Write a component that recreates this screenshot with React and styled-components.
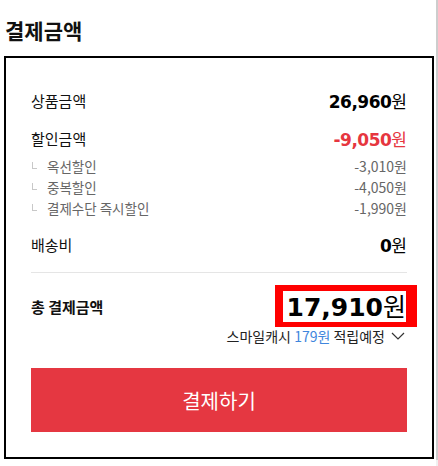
import React from "react";
import styled, { createGlobalStyle } from "styled-components";

const KR = `"Noto Sans CJK KR", "Noto Sans", sans-serif`;
const NUM = `"DejaVu Sans", "Noto Sans CJK KR", sans-serif`;

const discounts = [
  { name: "옥선할인", price: "-3,010" },
  { name: "중복할인", price: "-4,050" },
  { name: "결제수단 즉시할인", price: "-1,990" },
];

export default function App() {
  return (
    <Page>
      <GlobalStyle />
      <Main>
        <Title>결제금액</Title>
        <Box>
          <Row>
            <Label>상품금액</Label>
            <Amount>
              26,960<Won>원</Won>
            </Amount>
          </Row>
          <Row $gap>
            <Label>할인금액</Label>
            <Amount color="#e6363f">
              -9,050<Won>원</Won>
            </Amount>
          </Row>
          <SubList>
            {discounts.map((d) => (
              <SubRow key={d.name}>
                <SubName>
                  <Corner />
                  {d.name}
                </SubName>
                <SubPrice>{d.price}원</SubPrice>
              </SubRow>
            ))}
          </SubList>
          <Row $gap>
            <Label>배송비</Label>
            <Amount>
              0<Won>원</Won>
            </Amount>
          </Row>
          <Divider />
          <TotalRow>
            <TotalLabel>총 결제금액</TotalLabel>
            <Highlight>
              <TotalAmount>
                17,910<Won>원</Won>
              </TotalAmount>
            </Highlight>
          </TotalRow>
          <Cashback>
            <span>
              스마일캐시 <Blue>179원</Blue> 적립예정
            </span>
            <svg width="14" height="8" viewBox="0 0 14 8">
              <polyline
                points="1,1 7,7 13,1"
                fill="none"
                stroke="#333"
                strokeWidth="1.2"
              />
            </svg>
          </Cashback>
          <PayButton>결제하기</PayButton>
        </Box>
      </Main>
      <ScrollTrack>
        <Thumb />
      </ScrollTrack>
    </Page>
  );
}

const GlobalStyle = createGlobalStyle`
  body {
    margin: 0;
    background: #ffffff;
    font-family: ${KR};
    color: #111;
  }
`;

const Page = styled.div`
  display: flex;
  width: 438px;
  height: 466px;
  overflow: hidden;
`;

const Main = styled.div`
  flex: 1;
  padding: 16px 2px 0 4px;
`;

const ScrollTrack = styled.div`
  width: 2px;
  background: #f0f0f0;
  display: flex;
  flex-direction: column;
`;

const Thumb = styled.div`
  height: 460px;
  background: #cdcdcd;
`;

const Title = styled.h2`
  margin: 0 0 12px;
  padding-left: 1px;
  font-size: 21px;
  line-height: 28px;
  font-weight: bold;
  color: #111;
`;

const Box = styled.div`
  border: 2px solid #000;
  padding: 30px 25px 25px;
`;

const Row = styled.div`
  display: flex;
  justify-content: space-between;
  align-items: center;
  height: 24px;
  margin-top: ${(p) => (p.$gap ? "14px" : "0")};
`;

const Label = styled.span`
  font-size: 15px;
  color: #111;
`;

const Amount = styled.span`
  font-family: ${NUM};
  font-weight: bold;
  font-size: 17px;
  letter-spacing: -0.5px;
  color: ${(p) => p.color || "#000"};
`;

const Won = styled.span`
  font-family: ${KR};
  font-weight: normal;
  letter-spacing: 0;
`;

const SubList = styled.div`
  margin-top: 5px;
`;

const SubRow = styled.div`
  display: flex;
  justify-content: space-between;
  align-items: center;
  height: 21px;
  color: #666;
`;

const SubName = styled.span`
  display: flex;
  align-items: center;
  font-size: 13.5px;
`;

const Corner = styled.i`
  width: 4px;
  height: 6px;
  border-left: 1px solid #c8c8c8;
  border-bottom: 1px solid #c8c8c8;
  margin: 0 10px 0 1px;
`;

const SubPrice = styled.span`
  font-size: 14px;
`;

const Divider = styled.hr`
  border: 0;
  height: 1px;
  background: #e5e5e5;
  margin: 16px 0;
`;

const TotalRow = styled.div`
  display: flex;
  justify-content: space-between;
  align-items: center;
  height: 34px;
`;

const TotalLabel = styled.span`
  font-size: 15px;
  font-weight: bold;
`;

const Highlight = styled.div`
  border: 6px solid #ff0000;
  border-bottom-width: 5px;
  border-left-width: 8px;
  border-right-width: 11px;
  margin-right: -10px;
  padding-left: 4px;
  display: flex;
  align-items: center;
`;

const TotalAmount = styled.span`
  font-family: ${NUM};
  font-weight: bold;
  font-size: 25px;
  line-height: 28px;
  color: #000;
`;

const Cashback = styled.div`
  display: flex;
  justify-content: flex-end;
  align-items: center;
  margin-top: 4px;
  font-size: 14px;
  line-height: 18px;
  color: #222;

  svg {
    margin: 0 2px 0 6px;
  }
`;

const Blue = styled.span`
  color: #3f86dd;
`;

const PayButton = styled.button`
  display: block;
  width: 100%;
  height: 64px;
  margin-top: 23px;
  border: 0;
  background: #e53741;
  color: #fff;
  font-family: ${KR};
  font-size: 20px;
  cursor: pointer;
`;
